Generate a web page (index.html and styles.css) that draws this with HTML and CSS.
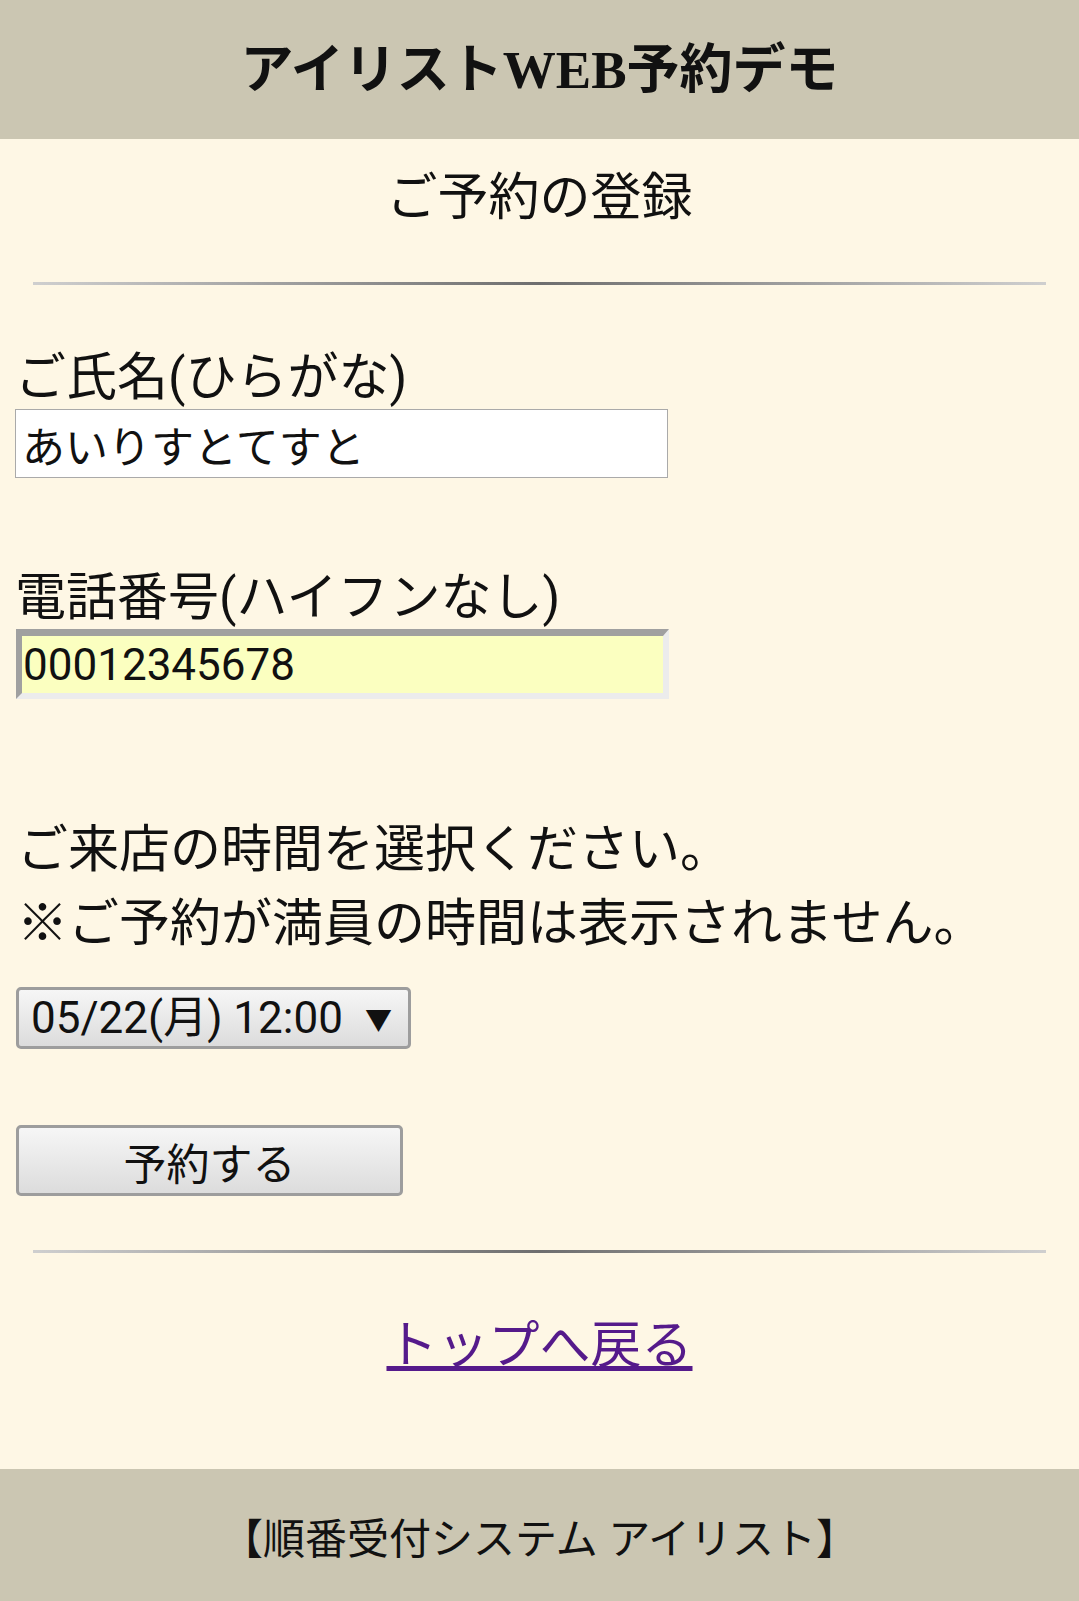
FILE: index.html
```html
<!DOCTYPE html>
<html lang="ja">
<head>
  <meta charset="UTF-8">
  <title>アイリストWEB予約デモ</title>
  <link rel="stylesheet" href="styles.css">
</head>
<body>
  <header class="site-header">
    <h1>アイリストWEB予約デモ</h1>
  </header>

  <main class="content">
    <h2 class="page-title">ご予約の登録</h2>
    <hr class="rule rule-top">

    <form class="reserve-form">
      <label class="field-label" for="kana">ご氏名(ひらがな)</label>
      <input class="text-input" id="kana" value="あいりすとてすと">

      <label class="field-label label-tel" for="tel">電話番号(ハイフンなし)</label>
      <input class="text-input tel-input" id="tel" value="00012345678">

      <p class="note">ご来店の時間を選択ください。<br>※ご予約が満員の時間は表示されません。</p>

      <div class="select-box">
        <select id="slot">
          <option>05/22(月) 12:00</option>
        </select>
        <span class="select-arrow">▼</span>
      </div>

      <button type="button" class="submit-btn">予約する</button>
    </form>

    <hr class="rule rule-bottom">

    <div class="back-link">
      <a href="#">トップへ戻る</a>
    </div>
  </main>

  <footer class="site-footer">【順番受付システム アイリスト】</footer>
</body>
</html>
```

FILE: styles.css
```css
:root {
  --bar: #cbc6b2;
  --background: #fef7e5;
  --text: #111;
}

body {
  margin: 0;
  background: var(--background);
  color: var(--text);
  font-family: Roboto, "Noto Sans CJK JP", sans-serif;
}

.site-header {
  height: 139px;
  background: var(--bar);
  display: flex;
  align-items: center;
  justify-content: center;
}

.site-header h1 {
  margin: 0;
  font-family: "Liberation Serif", "Noto Sans CJK JP", serif;
  font-size: 53px;
  font-weight: bold;
  line-height: 62px;
}

.content {
  padding: 0 15px;
}

.page-title {
  margin: 24px 0 0;
  text-align: center;
  font-size: 51px;
  font-weight: normal;
  line-height: 70px;
}

.rule {
  border: none;
  height: 3px;
  margin: 0 18px;
  background: linear-gradient(to right, #cfcfcf, #6e6e6e 50%, #cfcfcf);
}

.rule-top {
  margin-top: 49px;
}

.reserve-form {
  display: flex;
  flex-direction: column;
  align-items: flex-start;
}

.field-label {
  margin-top: 62px;
  font-size: 51px;
  line-height: 62px;
}

.label-tel {
  margin-top: 89px;
}

.text-input {
  box-sizing: border-box;
  width: 653px;
  height: 69px;
  margin: 0;
  padding: 0 6px;
  border: 1px solid #aaa;
  background: #fff;
  color: var(--text);
  font-family: Roboto, "Noto Sans CJK JP", sans-serif;
  font-size: 43px;
}

.tel-input {
  margin-left: 1px;
  height: 70px;
  padding: 0 1px;
  border-width: 7px 6px 6px 6px;
  border-color: #a0a0a0 #ececec #ececec #a0a0a0;
  background: #fbffc0;
  font-size: 44px;
}

.note {
  margin: 114px 0 0 2px;
  font-size: 51px;
  line-height: 74px;
}

.select-box {
  box-sizing: border-box;
  display: flex;
  align-items: center;
  width: 395px;
  height: 62px;
  margin: 26px 0 0 1px;
  padding: 0 12px;
  border: 3px solid #9d9d9d;
  border-radius: 5px;
  background: linear-gradient(#f6f6f6, #dcdcdc);
}

.select-box select {
  appearance: none;
  -webkit-appearance: none;
  flex: 1;
  border: none;
  background: transparent;
  padding: 0;
  color: var(--text);
  font-family: Roboto, "Noto Sans CJK JP", sans-serif;
  font-size: 44px;
}

.select-arrow {
  font-size: 27px;
  margin-right: 4px;
}

.submit-btn {
  box-sizing: border-box;
  width: 387px;
  height: 71px;
  margin: 76px 0 0 1px;
  border: 3px solid #9d9d9d;
  border-radius: 5px;
  background: linear-gradient(#f6f6f6, #dcdcdc);
  color: var(--text);
  font-family: Roboto, "Noto Sans CJK JP", sans-serif;
  font-size: 43px;
}

.rule-bottom {
  margin-top: 54px;
}

.back-link {
  margin-top: 53px;
  text-align: center;
  font-size: 51px;
  line-height: 80px;
}

.back-link a {
  color: #551a8b;
}

.site-footer {
  margin-top: 83px;
  height: 132px;
  background: var(--bar);
  display: flex;
  align-items: center;
  justify-content: center;
  font-size: 42px;
}
```
